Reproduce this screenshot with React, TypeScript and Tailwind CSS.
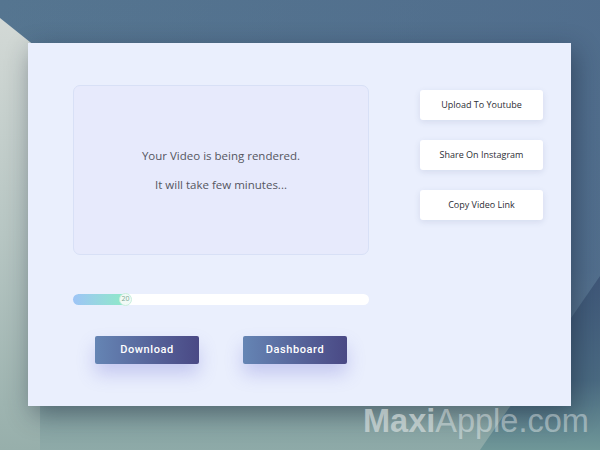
import * as React from "react"

const shareActions = ["Upload To Youtube", "Share On Instagram", "Copy Video Link"]

const Wallpaper: React.FC = () => (
  <svg className="absolute inset-0" width="600" height="450" viewBox="0 0 600 450">
    <defs>
      <linearGradient id="base" x1="0" y1="0" x2="0" y2="1">
        <stop offset="0" stopColor="#557590" />
        <stop offset="0.6" stopColor="#5a7992" />
        <stop offset="0.82" stopColor="#7c9b9d" />
        <stop offset="1" stopColor="#8eaaa8" />
      </linearGradient>
      <linearGradient id="tint" x1="0" y1="0" x2="1" y2="0">
        <stop offset="0" stopColor="#4e6a8b" stopOpacity="0" />
        <stop offset="1" stopColor="#4e6a8b" stopOpacity="0.7" />
      </linearGradient>
      <linearGradient id="left" x1="0" y1="0" x2="0" y2="1">
        <stop offset="0" stopColor="#d3d9d6" />
        <stop offset="0.5" stopColor="#b7c6c3" />
        <stop offset="1" stopColor="#97afab" />
      </linearGradient>
      <linearGradient id="navy" x1="0" y1="0" x2="0" y2="1">
        <stop offset="0" stopColor="#3f5778" />
        <stop offset="0.6" stopColor="#4a6a82" />
        <stop offset="1" stopColor="#6f9798" />
      </linearGradient>
    </defs>
    <rect width="600" height="450" fill="url(#base)" />
    <rect width="600" height="330" fill="url(#tint)" />
    <polygon points="600,276 600,450 480,450" fill="url(#navy)" />
    <polygon points="0,18 40,50 40,450 0,450" fill="url(#left)" />
  </svg>
)

export default function App() {
  return (
    <div className="relative w-[600px] h-[450px] overflow-hidden pt-[43px] pl-[28px]">
      <Wallpaper />

      <div className="relative flex w-[543px] h-[363px] bg-[#eaeffd] pl-[45px] pt-[42px] shadow-[4px_8px_24px_rgba(20,30,50,0.45)]">
        <div className="flex flex-col w-[296px]">
          <div
            className="flex flex-col items-center justify-center gap-[11px] h-[170px] rounded-[7px] border border-[#d8e0f6] bg-[#e7eafc] text-[11.5px] text-[#55565f]"
            style={{ fontFamily: '"Open Sans", sans-serif' }}
          >
            <p>Your Video is being rendered.</p>
            <p>It will take few minutes...</p>
          </div>

          <div className="relative mt-[39px] h-[11px] rounded-full bg-white">
            <div className="h-full w-[56px] rounded-full bg-gradient-to-r from-[#9ec4f6] to-[#8decc3]" />
            <div
              className="absolute left-[46px] top-[-1px] flex items-center justify-center w-[13px] h-[13px] rounded-full bg-[#f1faf6] border border-[#c9efdd] text-[7px] text-[#7ea894]"
              style={{ fontFamily: '"Open Sans", sans-serif' }}
            >
              20
            </div>
          </div>

          <div className="flex gap-[44px] mt-[31px] pl-[22px]">
            {["Download", "Dashboard"].map((label) => (
              <button
                key={label}
                className="w-[104px] h-[28px] rounded-[2px] bg-gradient-to-r from-[#6585b4] to-[#4a4985] text-white text-[11px] font-medium tracking-[0.6px] shadow-[0_10px_18px_rgba(100,100,210,0.28)]"
                style={{ fontFamily: "Roboto, sans-serif" }}
              >
                {label}
              </button>
            ))}
          </div>
        </div>

        <div className="flex flex-col gap-[20px] ml-[51px] pt-[5px]">
          {shareActions.map((label) => (
            <button
              key={label}
              className="w-[123px] h-[30px] rounded-[3px] bg-white text-[9px] font-medium text-[#2c2d35] shadow-[0_2px_6px_rgba(60,70,120,0.12)]"
              style={{ fontFamily: '"Open Sans", sans-serif' }}
            >
              {label}
            </button>
          ))}
        </div>
      </div>

      <div
        className="absolute left-[363px] top-[401px] text-[32.5px] leading-[40px] text-white/40"
        style={{ fontFamily: '"Liberation Sans", Arial, sans-serif' }}
      >
        <span className="font-bold text-[#d4dcdc]/70">Maxi</span>
        <span className="font-normal">Apple.com</span>
      </div>
    </div>
  )
}
